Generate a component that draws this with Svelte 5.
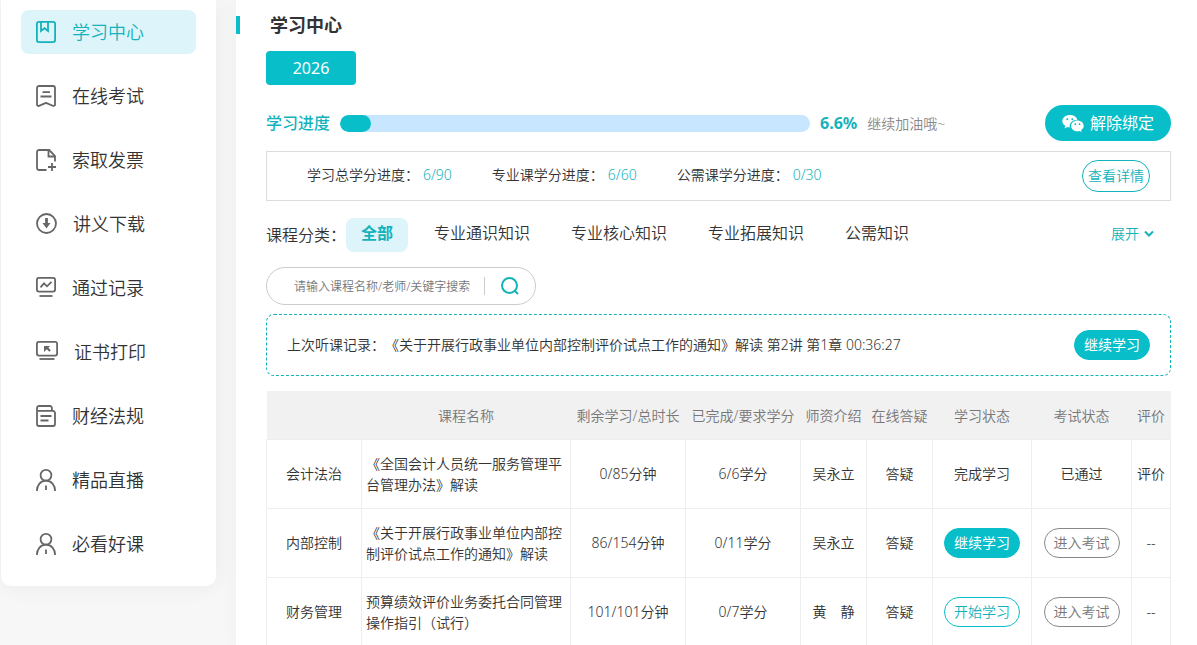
<script lang="ts">
	const menu = [
		{ icon: 'book', label: '学习中心', width: 20 },
		{ icon: 'exam', label: '在线考试', width: 20 },
		{ icon: 'invoice', label: '索取发票', width: 20 },
		{ icon: 'download', label: '讲义下载', width: 21 },
		{ icon: 'record', label: '通过记录', width: 20 },
		{ icon: 'print', label: '证书打印', width: 22 },
		{ icon: 'law', label: '财经法规', width: 20 },
		{ icon: 'person', label: '精品直播', width: 20 },
		{ icon: 'person', label: '必看好课', width: 20 }
	];

	const credits = [
		{ label: '学习总学分进度：', value: '6/90' },
		{ label: '专业课学分进度：', value: '6/60' },
		{ label: '公需课学分进度：', value: '0/30' }
	];

	const categories = ['全部', '专业通识知识', '专业核心知识', '专业拓展知识', '公需知识'];

	const columns = [
		{ title: '', cls: 'type' },
		{ title: '课程名称', cls: 'name' },
		{ title: '剩余学习/总时长', cls: 'wide' },
		{ title: '已完成/要求学分', cls: 'wide' },
		{ title: '师资介绍', cls: 'narrow' },
		{ title: '在线答疑', cls: 'narrow' },
		{ title: '学习状态', cls: 'study' },
		{ title: '考试状态', cls: 'exam' },
		{ title: '评价', cls: 'rate' }
	];

	const courses = [
		{
			type: '会计法治',
			name: '《全国会计人员统一服务管理平台管理办法》解读',
			time: '0/85分钟',
			credit: '6/6学分',
			teacher: '吴永立',
			study: 'done',
			rate: '评价'
		},
		{
			type: '内部控制',
			name: '《关于开展行政事业单位内部控制评价试点工作的通知》解读',
			time: '86/154分钟',
			credit: '0/11学分',
			teacher: '吴永立',
			study: 'continue',
			rate: '--'
		},
		{
			type: '财务管理',
			name: '预算绩效评价业务委托合同管理操作指引（试行）',
			time: '101/101分钟',
			credit: '0/7学分',
			teacher: '黄　静',
			study: 'start',
			rate: '--'
		}
	];

	const progress = 6.6;
	let activeMenu = 0;
	let activeCategory = 0;
	let keyword = '';
</script>

<div class="page">
	<aside class="sidebar">
		<nav>
			{#each menu as item, i}
				<a href="#menu-{i}" class="menu-item" class:active={i === activeMenu} on:click|preventDefault={() => (activeMenu = i)}>
					<svg width={item.width} height="22" viewBox="0 0 {item.width} 22" fill="none" stroke="currentColor" stroke-width="1.8">
						{#if item.icon === 'book'}
							<rect x="0.9" y="0.9" width="18.2" height="20.2" rx="2" />
							<path d="M5 1v9l3.5-2.8L12 10V1" />
						{:else if item.icon === 'exam'}
							<path d="M1 20V3a2 2 0 0 1 2-2h14a2 2 0 0 1 2 2v17.2l-1.6.8L10 17.8 2.4 21.1Z" stroke-linejoin="round" />
							<path d="M6.5 7.200h7.500M4.500 11.500h11" />
						{:else if item.icon === 'invoice'}
							<path d="M10.500 21H3a2 2 0 0 1-2-2V3a2 2 0 0 1 2-2h10.200l5.800 6v5.500" />
							<path d="M12.500 1.500v6H19M16 14v8M12 18h8" />
						{:else if item.icon === 'download'}
							<circle cx="10.500" cy="10.500" r="9.500" />
							<path d="M10.500 5v6" stroke-width="2.800" />
							<path d="M6.500 10h8l-4 5.500Z" fill="currentColor" stroke="none" />
						{:else if item.icon === 'record'}
							<rect x="0.9" y="0.9" width="18.200" height="13.700" rx="2" />
							<path d="M4.500 10.300l3.500-4 3 3 4.500-4.500" />
							<path d="M3.500 19h13" />
						{:else if item.icon === 'print'}
							<rect x="0.9" y="0.9" width="20.200" height="13.700" rx="2" />
							<path d="M8 5h6l-1.600 1.700 2.400 2.600-1.500 1.500-2.500-2.500L8 11Z" fill="currentColor" stroke="none" />
							<path d="M3.500 18h15" />
						{:else if item.icon === 'law'}
							<path d="M15.900 5.800V3a2 2 0 0 0-2-2H3a2 2 0 0 0-2 2v16a2 2 0 0 0 2 2h14a2 2 0 0 0 2-2V7.500l-1.500-1.700H1" />
							<path d="M4.500 11h11M4.500 15.500h8" />
						{:else}
							<circle cx="10" cy="6.300" r="5.400" />
							<path d="M.9 22c0-6 3.800-10.300 9.100-10.300s9.100 4.300 9.100 10.300M10 16.500V21" />
						{/if}
					</svg>
					<span>{item.label}</span>
				</a>
			{/each}
		</nav>
	</aside>

	<main class="content">
		<h1>学习中心</h1>
		<button class="year">2026</button>

		<div class="progress-row">
			<span class="progress-label">学习进度</span>
			<div class="track">
				<div class="fill" style="width: {progress}%"></div>
			</div>
			<strong>{progress}%</strong>
			<span class="hint">继续加油哦~</span>
			<button class="unbind">
				<svg width="22" height="18" viewBox="0 0 22 18">
					<path fill="#fff" d="M8 1C3.600 1 .3 3.700.3 7.100c0 1.900 1.100 3.600 2.900 4.700L2.500 14.600l2.900-1.500c.8.2 1.500.3 2.400.3-.9-4.300 3-7.600 7.600-7.600C14.600 3 11.600 1 8 1Z" />
					<path fill="#fff" d="M21.700 11.900c0-3-2.900-5.400-6.300-5.400s-6.300 2.400-6.300 5.400 2.800 5.400 6.300 5.400c.7 0 1.500-.2 2.200-.4l2.100 1.100-.6-1.900c1.500-1 2.600-2.500 2.600-4.200Z" />
					<g fill="#08bec9">
						<circle cx="5.300" cy="5.200" r="1" />
						<circle cx="10.300" cy="5.200" r="1" />
						<circle cx="13.300" cy="10.200" r=".9" />
						<circle cx="17.500" cy="10.200" r=".9" />
					</g>
				</svg>
				解除绑定
			</button>
		</div>

		<div class="credits">
			{#each credits as item}
				<span class="credit">{item.label}<em>{item.value}</em></span>
			{/each}
			<button class="detail">查看详情</button>
		</div>

		<div class="categories">
			<span>课程分类：</span>
			<div class="tabs">
				{#each categories as name, i}
					<button class="tab" class:active={i === activeCategory} on:click={() => (activeCategory = i)}>{name}</button>
				{/each}
			</div>
			<button class="expand">
				展开
				<svg width="10" height="8" viewBox="0 0 10 8" fill="none" stroke="currentColor" stroke-width="2">
					<path d="M1 1.500l4 4 4-4" />
				</svg>
			</button>
		</div>

		<form class="search" on:submit|preventDefault>
			<input type="text" aria-label="搜索课程" placeholder="请输入课程名称/老师/关键字搜索" bind:value={keyword} />
			<button aria-label="搜索">
				<svg width="18" height="18" viewBox="0 0 18 18" fill="none" stroke="currentColor" stroke-width="2">
					<circle cx="8.500" cy="8.500" r="7.500" />
					<path d="M13.500 13.500l3.500 3.500" />
				</svg>
			</button>
		</form>

		<div class="last">
			<p>上次听课记录：《关于开展行政事业单位内部控制评价试点工作的通知》解读 第2讲 第1章 00:36:27</p>
			<button class="pill solid">继续学习</button>
		</div>

		<table>
			<thead>
				<tr>
					{#each columns as col}
						<th class={col.cls}>{col.title}</th>
					{/each}
				</tr>
			</thead>
			<tbody>
				{#each courses as course}
					<tr>
						<td>{course.type}</td>
						<td class="name">{course.name}</td>
						<td>{course.time}</td>
						<td>{course.credit}</td>
						<td>{course.teacher}</td>
						<td>答疑</td>
						<td>
							{#if course.study === 'done'}
								完成学习
							{:else if course.study === 'continue'}
								<button class="pill solid">继续学习</button>
							{:else}
								<button class="pill line">开始学习</button>
							{/if}
						</td>
						<td>
							{#if course.study === 'done'}
								已通过
							{:else}
								<button class="pill gray">进入考试</button>
							{/if}
						</td>
						<td>{course.rate}</td>
					</tr>
				{/each}
			</tbody>
		</table>
	</main>
</div>

<style>
	:global(body) {
		margin: 0;
		background: #f7f7f7;
	}

	.page {
		display: flex;
		align-items: flex-start;
		gap: 20px;
		padding-left: 1px;
		color: #333;
		font: 350 14px/21px 'Noto Sans', 'Noto Sans CJK SC', sans-serif;
		text-spacing-trim: space-all;
	}

	.page * {
		box-sizing: border-box;
	}

	button,
	input {
		padding: 0;
		border: 0;
		background: none;
		color: inherit;
		font: inherit;
		text-spacing-trim: inherit;
	}

	button {
		cursor: pointer;
		white-space: nowrap;
	}

	.sidebar {
		flex: none;
		width: 215px;
		padding: 10px 20px 20px;
		background: #fff;
		border-radius: 0 0 10px 10px;
		box-shadow: 0 0 24px rgba(0, 0, 0, 0.06);
	}

	nav {
		display: flex;
		flex-direction: column;
		gap: 20px;
	}

	.menu-item {
		display: flex;
		align-items: center;
		gap: 16px;
		height: 44px;
		padding-left: 15px;
		border-radius: 8px;
		color: #333;
		font-size: 18px;
		text-decoration: none;
	}

	.menu-item svg {
		color: #666;
	}

	.menu-item.active,
	.menu-item.active svg {
		color: #14b2bb;
	}

	.menu-item.active {
		background: #dcf4fa;
	}

	.content {
		flex: 1;
		min-width: 0;
		min-height: 100vh;
		padding: 16px 26px 0 30px;
		background: #fff;
		box-shadow: 0 0 16px rgba(0, 0, 0, 0.04);
	}

	h1 {
		margin: 0 0 17px -30px;
		padding-left: 30px;
		border-left: 4px solid #08bec9;
		font-size: 18px;
		font-weight: 700;
		line-height: 18px;
	}

	.year {
		display: block;
		width: 90px;
		height: 34px;
		background: #08bec9;
		border-radius: 4px;
		color: #fff;
		font-size: 16px;
		font-weight: 400;
	}

	.progress-row {
		display: flex;
		align-items: center;
		gap: 10px;
		margin-top: 20px;
		color: #14b2bb;
		font-size: 16px;
	}

	.progress-label {
		font-weight: 500;
	}

	strong {
		font-weight: 700;
	}

	.track {
		flex: 0 1 470px;
		height: 17px;
		background: #c8e6ff;
		border-radius: 9px;
		overflow: hidden;
	}

	.fill {
		height: 100%;
		background: #08bec9;
		border-radius: 9px;
	}

	.hint {
		color: #888;
		font-size: 14px;
	}

	.unbind {
		display: flex;
		align-items: center;
		justify-content: center;
		gap: 6px;
		width: 126px;
		height: 36px;
		margin-left: auto;
		background: #08bec9;
		border-radius: 18px;
		color: #fff;
		font-weight: 400;
	}

	.credits {
		display: flex;
		align-items: center;
		gap: 40px;
		height: 50px;
		margin-top: 10px;
		padding: 0 20px 0 40px;
		border: 1px solid #ddd;
	}

	.credit {
		display: flex;
		gap: 4px;
		padding-bottom: 3px;
	}

	em {
		color: #14b2bb;
		font-style: normal;
	}

	.detail {
		width: 68px;
		height: 32px;
		margin-left: auto;
		padding-bottom: 1px;
		border: 1px solid #14b2bb;
		border-radius: 16px;
		color: #14b2bb;
	}

	.categories {
		display: flex;
		align-items: center;
		margin-top: 17px;
		padding-right: 17px;
		font-size: 16px;
	}

	.tabs {
		display: flex;
		gap: 11px;
	}

	.tab {
		height: 34px;
		padding: 0 15px 3px;
		border-radius: 8px;
	}

	.tab.active {
		background: #dcf4fa;
		color: #14b2bb;
		font-weight: 700;
	}

	.expand {
		display: flex;
		align-items: center;
		gap: 5px;
		margin-left: auto;
		padding-bottom: 3px;
		color: #14b2bb;
		font-size: 14px;
	}

	.search {
		display: flex;
		align-items: center;
		width: 270px;
		height: 38px;
		margin-top: 15px;
		padding-left: 27px;
		border: 1px solid #ccc;
		border-radius: 19px;
	}

	.search input {
		flex: 1;
		min-width: 0;
		outline: none;
		font-size: 12px;
	}

	.search input::placeholder {
		color: #777;
		opacity: 1;
	}

	.search button {
		display: flex;
		align-items: center;
		width: 51px;
		height: 18px;
		padding-left: 16px;
		border-left: 1px solid #ccc;
		color: #14b2bb;
	}

	.last {
		display: flex;
		align-items: center;
		justify-content: space-between;
		height: 62px;
		margin-top: 9px;
		padding: 0 20px;
		border: 1px dashed #14b2bb;
		border-radius: 8px;
	}

	.last p {
		margin: 0;
		padding-bottom: 2px;
	}

	.pill {
		width: 76px;
		height: 30px;
		padding-bottom: 1px;
		border: 1px solid #08bec9;
		border-radius: 15px;
	}

	.solid {
		background: #08bec9;
		color: #fff;
		font-weight: 400;
	}

	.line {
		color: #14b2bb;
	}

	.gray {
		border-color: #888;
		color: #777;
	}

	table {
		width: 100%;
		margin-top: 15px;
		border-collapse: collapse;
		table-layout: fixed;
	}

	th {
		height: 48px;
		padding: 2px 0 0;
		background: #f1f1f1;
		color: #777;
		font-weight: 350;
		white-space: nowrap;
	}

	td {
		height: 69px;
		padding: 0;
		border: 1px solid #eee;
		text-align: center;
	}

	td.name {
		padding: 0 4px;
		text-align: left;
	}

	.type {
		width: 95px;
	}

	.wide {
		width: 115px;
	}

	.narrow {
		width: 66px;
	}

	.study {
		width: 99px;
	}

	.exam {
		width: 100px;
	}

	.rate {
		width: 39px;
	}
</style>
